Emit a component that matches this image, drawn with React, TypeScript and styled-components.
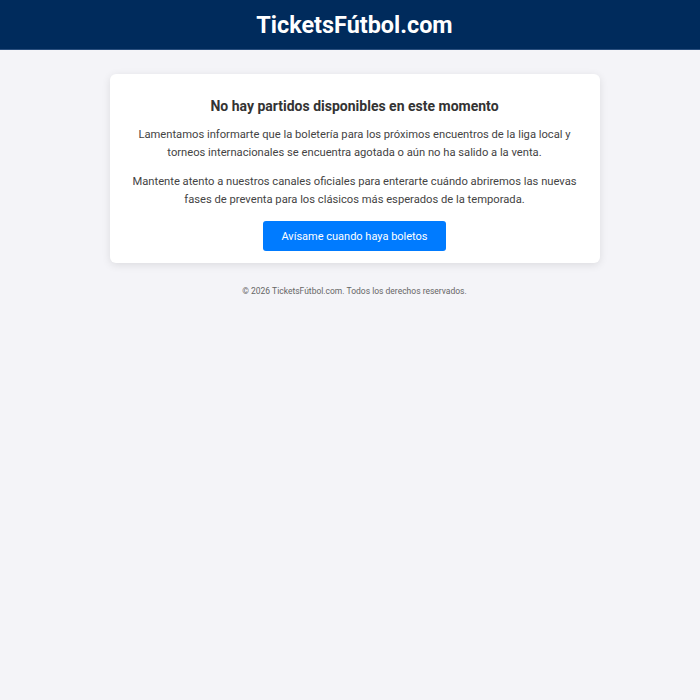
import styled, { createGlobalStyle } from "styled-components";

const GlobalStyle = createGlobalStyle`
  body {
    margin: 0;
    background-color: #f4f4f8;
    font-family: Roboto, "Liberation Sans", Arial, sans-serif;
    color: #333;
  }
`;

const Header = styled.header`
  background-color: #002b5c;
  height: 50px;
  padding-left: 9px;
  display: flex;
  align-items: center;
  justify-content: center;
  border-bottom: 1px solid #2a4f7e;
  box-sizing: border-box;
`;

const Logo = styled.h1`
  margin: 0;
  color: #fff;
  font-size: 23.4px;
  font-weight: 700;
`;

const Main = styled.main`
  display: flex;
  flex-direction: column;
  align-items: center;
  padding: 24px 0 0 9px;
`;

const Card = styled.section`
  width: 490px;
  box-sizing: border-box;
  background-color: #fff;
  border-radius: 6px;
  box-shadow: 0 2px 8px rgba(0, 0, 0, 0.1);
  padding: 22px 20px 12px;
  text-align: center;
`;

const Title = styled.h2`
  margin: 0 0 10px;
  font-size: 14px;
  line-height: 20px;
  font-weight: 700;
  color: #333;
`;

const Text = styled.p`
  margin: 0 0 11px;
  font-size: 11.2px;
  line-height: 18px;
  color: #444;
`;

const NotifyButton = styled.button`
  margin-top: 1px;
  background-color: #007bff;
  color: #fff;
  border: none;
  border-radius: 3px;
  height: 30px;
  padding: 0 18px;
  font-family: inherit;
  font-size: 11px;
  cursor: pointer;
`;

const Footer = styled.footer`
  margin-top: 23px;
  font-size: 8.5px;
  color: #666;
  text-align: center;
`;

export default function App() {
  return (
    <>
      <GlobalStyle />
      <Header>
        <Logo>TicketsFútbol.com</Logo>
      </Header>
      <Main>
        <Card>
          <Title>No hay partidos disponibles en este momento</Title>
          <Text>
            Lamentamos informarte que la boletería para los próximos encuentros
            de la liga local y torneos internacionales se encuentra agotada o
            aún no ha salido a la venta.
          </Text>
          <Text>
            Mantente atento a nuestros canales oficiales para enterarte cuándo
            abriremos las nuevas fases de preventa para los clásicos más
            esperados de la temporada.
          </Text>
          <NotifyButton>Avísame cuando haya boletos</NotifyButton>
        </Card>
        <Footer>© 2026 TicketsFútbol.com. Todos los derechos reservados.</Footer>
      </Main>
    </>
  );
}
